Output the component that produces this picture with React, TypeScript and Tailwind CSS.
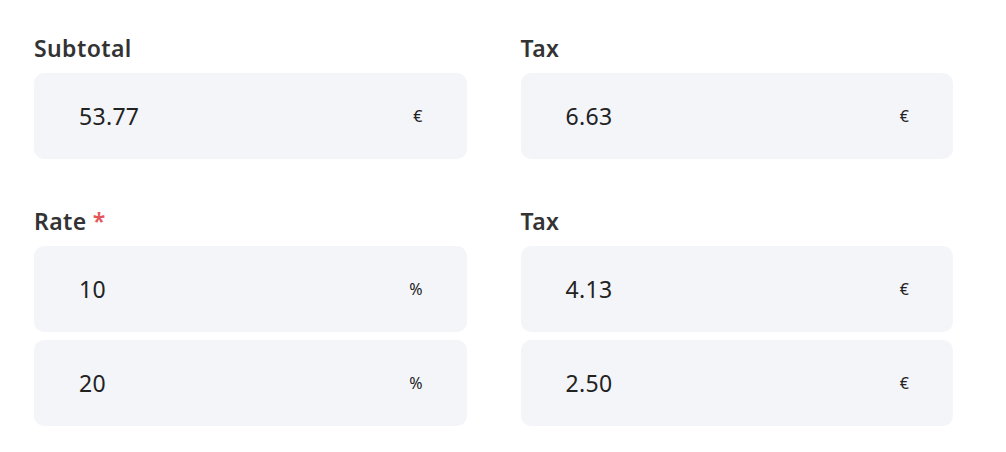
function Field({
  label,
  required,
  values,
  unit,
}: {
  label: string;
  required?: boolean;
  values: string[];
  unit: string;
}) {
  return (
    <div className="flex flex-col">
      <label className="h-[40px] text-[23px] font-semibold leading-[30px] tracking-[0.4px] text-[#333333]">
        {label}
        {required && <span className="ml-[6px] text-[#e5565b]">*</span>}
      </label>
      <div className="flex flex-col gap-[8px]">
        {values.map((v) => (
          <div
            key={v}
            className="flex h-[86px] items-center justify-between rounded-[10px] bg-[#f4f5f9] pl-[45px] pr-[44px]"
          >
            <span className="text-[23px] tracking-[0.3px] text-[#222222]">{v}</span>
            <span className="text-[16px] text-[#222222]">{unit}</span>
          </div>
        ))}
      </div>
    </div>
  );
}

export default function App() {
  return (
    <div className="min-h-[452px] bg-white pl-[34px] pr-[53px] pt-[33px] font-['Noto_Sans',sans-serif]">
      <div className="grid grid-cols-2 gap-x-[54px] gap-y-[47px]">
        <Field label="Subtotal" values={["53.77"]} unit="€" />
        <Field label="Tax" values={["6.63"]} unit="€" />
        <Field label="Rate" required values={["10", "20"]} unit="%" />
        <Field label="Tax" values={["4.13", "2.50"]} unit="€" />
      </div>
    </div>
  );
}
